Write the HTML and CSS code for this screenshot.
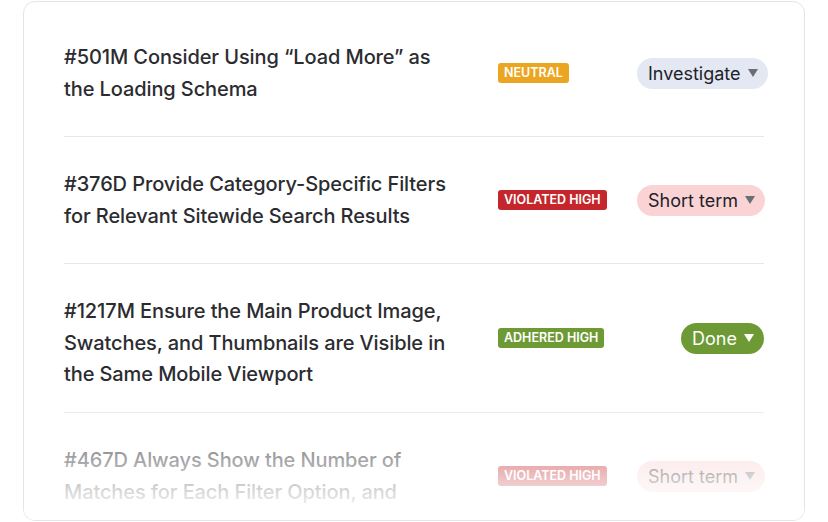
FILE: index.html
```html
<!DOCTYPE html>
<html lang="en">
<head>
<meta charset="utf-8">
<title>Guidelines</title>
<link rel="stylesheet" href="styles.css">
</head>
<body>
<div class="card">
  <div class="list">
    <div class="row">
      <div class="title">#501M Consider Using “Load More” as the Loading Schema</div>
      <div class="badge-cell"><span class="badge neutral">Neutral</span></div>
      <div class="select-cell"><span class="pill investigate">Investigate <svg class="caret" viewBox="0 0 10 8"><path d="M0 0H10L5 8Z"/></svg></span></div>
    </div>
    <div class="row">
      <div class="title">#376D Provide Category-Specific Filters for Relevant Sitewide Search Results</div>
      <div class="badge-cell"><span class="badge violated">Violated High</span></div>
      <div class="select-cell"><span class="pill short">Short term <svg class="caret" viewBox="0 0 10 8"><path d="M0 0H10L5 8Z"/></svg></span></div>
    </div>
    <div class="row">
      <div class="title">#1217M Ensure the Main Product Image, Swatches, and Thumbnails are Visible in the Same Mobile Viewport</div>
      <div class="badge-cell"><span class="badge adhered">Adhered High</span></div>
      <div class="select-cell"><span class="pill done">Done <svg class="caret" viewBox="0 0 10 8"><path d="M0 0H10L5 8Z"/></svg></span></div>
    </div>
    <div class="row">
      <div class="title">#467D Always Show the Number of Matches for Each Filter Option, and</div>
      <div class="badge-cell"><span class="badge violated">Violated High</span></div>
      <div class="select-cell"><span class="pill short">Short term <svg class="caret" viewBox="0 0 10 8"><path d="M0 0H10L5 8Z"/></svg></span></div>
    </div>
  </div>
  <div class="fade"></div>
</div>
</body>
</html>
```

FILE: styles.css
```css
* { box-sizing: border-box; }
html, body { margin: 0; padding: 0; background: #ffffff; }
body {
  font-family: "Inter", "Noto Sans", "Liberation Sans", sans-serif;
  color: #2b2c30;
}
.card {
  position: relative;
  margin: 1px 23px 0 23px;
  height: 520px;
  border: 1px solid #e3e5e9;
  border-radius: 12px;
  overflow: hidden;
  padding: 8px 40px 0 40px;
  background: #fff;
}
.list { display: flex; flex-direction: column; }
.row {
  display: grid;
  grid-template-columns: minmax(0, 1fr) 139px 127px;
  align-items: center;
  min-height: 127px;
  border-bottom: 1px solid #e4e6ea;
}
.title {
  align-self: start;
  margin: 32px 0 21.5px 0;
  font-size: 20px;
  font-weight: 500;
  line-height: 31.5px;
  padding-right: 44px;
  letter-spacing: -0.1px;
}
.badge-cell { display: flex; }
.badge {
  display: inline-block;
  color: #fff;
  font-size: 12.5px;
  font-weight: 600;
  text-transform: uppercase;
  line-height: 20px;
  height: 20px;
  padding: 0 6px;
  border-radius: 3px;
}
.neutral { background: #eba520; }
.violated { background: #c4262b; }
.adhered { background: #6d9a35; }
.select-cell { text-align: right; white-space: nowrap; }
.pill {
  display: inline-flex;
  align-items: center;
  height: 31px;
  padding: 0 10px 0 11px;
  border-radius: 16px;
  font-size: 18px;
  font-weight: 400;
  color: #1f2228;
}
.caret { width: 10px; height: 8px; margin-left: 7px; fill: #6a6e75; }
.investigate { background: #e3e8f3; }
.short { background: #fad4d5; }
.done { background: #6d9a35; color: #fff; }
.done .caret { fill: #fff; }
.fade {
  position: absolute;
  left: 0; right: 0; bottom: 0;
  height: 135px;
  background: linear-gradient(to bottom, rgba(255,255,255,0) 0%, rgba(255,255,255,0.95) 92%, #fff 100%);
  pointer-events: none;
}
```
